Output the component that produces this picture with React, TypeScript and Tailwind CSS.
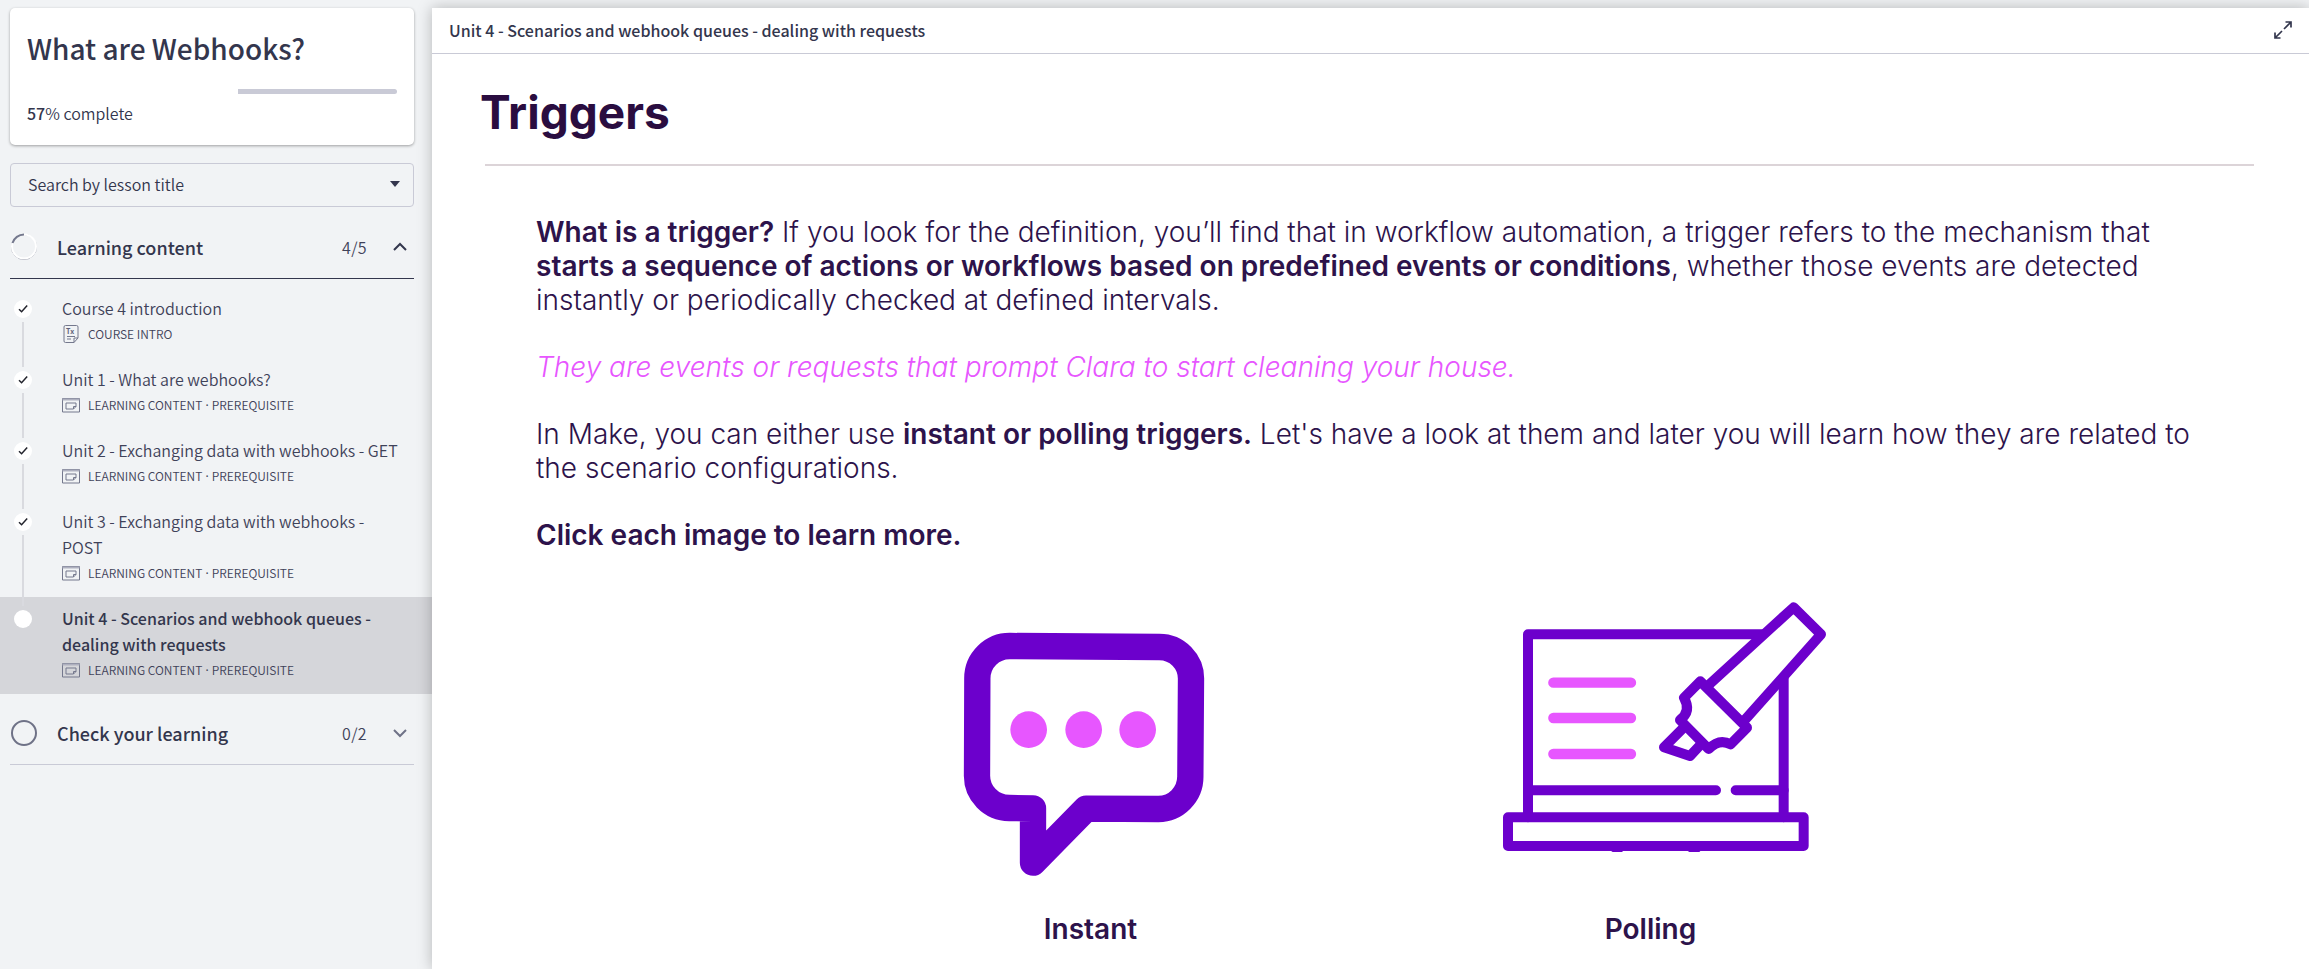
import React from "react";

type Lesson = { title: string; kind: string; prerequisite?: boolean; icon: "text" | "module"; state: "done" | "current" };

const lessons: Lesson[] = [
  { title: "Course 4 introduction", kind: "COURSE INTRO", icon: "text", state: "done" },
  { title: "Unit 1 - What are webhooks?", kind: "LEARNING CONTENT", prerequisite: true, icon: "module", state: "done" },
  { title: "Unit 2 - Exchanging data with webhooks - GET", kind: "LEARNING CONTENT", prerequisite: true, icon: "module", state: "done" },
  { title: "Unit 3 - Exchanging data with webhooks - POST", kind: "LEARNING CONTENT", prerequisite: true, icon: "module", state: "done" },
  { title: "Unit 4 - Scenarios and webhook queues - dealing with requests", kind: "LEARNING CONTENT", prerequisite: true, icon: "module", state: "current" },
];

function TextIcon() {
  return (
    <svg className="h-[18px] w-[18px]" viewBox="0 0 18 18" fill="none" stroke="#74788d" aria-hidden="true">
      <path d="M3.500.5h11a1.500 1.500 0 0 1 1.500 1.500v11l-4 4.500h-8.500a1.500 1.500 0 0 1-1.500-1.500v-14a1.500 1.500 0 0 1 1.500-1.500zM12 17.500v-4.500h4" />
      <path d="M5 11.500h8M5 14h4" />
      <text x="4" y="9" fontSize="7" fontWeight="700" fill="#5d6078" stroke="none">
        Tx
      </text>
    </svg>
  );
}

function ModuleIcon() {
  return (
    <svg className="h-[18px] w-[18px]" viewBox="0 0 18 18" fill="none" stroke="#74788d" aria-hidden="true">
      <path d="M.5 2.500h17v13.500h-17z" />
      <path d="M.5 3.500h17" stroke="#aeb0bf" strokeWidth="2" />
      <path d="M4 7h10v3.500l-2.500 2.500h-7.500zM11.500 13v-2.500h2.500" />
    </svg>
  );
}

function LessonRow({ lesson, last }: { lesson: Lesson; last: boolean }) {
  const current = lesson.state === "current";
  return (
    <li className={current ? "bg-[#d5d6da]" : ""}>
      <a href="#lesson" className="flex pr-8 pl-[14px]" aria-current={current ? "page" : undefined}>
        <span className="flex w-[18px] shrink-0 flex-col items-center pt-[13px]">
          <span className="flex h-[18px] w-[18px] shrink-0 items-center justify-center rounded-full bg-white">
            {!current && (
              <svg className="h-[10px] w-[10px]" viewBox="0 0 10 10" fill="none" stroke="#22232c" strokeWidth="1.500" aria-hidden="true">
                <path d="M1 5.200l2.600 2.500L9.200 1.600" />
              </svg>
            )}
          </span>
          {!last && <span className="mt-1 -mb-[9px] w-[2px] grow bg-[#d9dadf]" />}
        </span>
        <span className="ml-[30px] flex min-w-0 flex-col pt-2 pb-[11px]">
          <span className={current ? "text-[16px] leading-[26px] font-medium text-[#33364d]" : "text-[16px] leading-[26px] font-[350] text-[#3f4259]"}>{lesson.title}</span>
          <span className="flex h-[26px] items-center gap-2 text-[12px] font-[350] text-[#3f4259]">
            {lesson.icon === "text" ? <TextIcon /> : <ModuleIcon />}
            <span>
              {lesson.kind}
              {lesson.prerequisite && (
                <>
                  <span className="font-['Noto_Sans',sans-serif] font-normal"> · </span>
                  PREREQUISITE
                </>
              )}
            </span>
          </span>
        </span>
      </a>
    </li>
  );
}

function SectionHeader({ title, count, open }: { title: string; count: string; open: boolean }) {
  return (
    <button
      type="button"
      aria-expanded={open}
      className={
        open
          ? "mr-[18px] ml-[10px] flex h-[63px] items-center border-b border-[#33364d] text-left"
          : "mr-[18px] ml-[10px] flex h-[63px] items-center border-b border-[#c9cad6] text-left"
      }
    >
      <svg className="h-7 w-7 shrink-0" viewBox="0 0 28 28" fill="none" aria-hidden="true">
        {open ? (
          <>
            <circle cx="14" cy="14" r="12.500" stroke="#9294a5" strokeWidth="1" />
            <circle cx="14" cy="13.500" r="12" stroke="#fff" strokeWidth="2" />
            <path d="M2.500 10A12 12 0 0 1 14 1.500" stroke="#74788d" strokeWidth="2" />
          </>
        ) : (
          <circle cx="14" cy="14" r="12" stroke="#6f7287" strokeWidth="2" />
        )}
      </svg>
      <span className="ml-[19px] grow text-[18px] leading-[26px] font-medium text-[#33364d]">{title}</span>
      <span className="text-[16px] font-[350] tracking-wide text-[#3f4259]">{count}</span>
      <svg className="mr-1.5 ml-[25px] h-4 w-4" viewBox="0 0 16 16" fill="none" stroke={open ? "#33364d" : "#6f7287"} strokeWidth="2" aria-hidden="true">
        <path d={open ? "M2 11l6-6 6 6" : "M2 5l6 6 6-6"} />
      </svg>
    </button>
  );
}

function BubbleDrawing() {
  return (
    <svg className="w-full" viewBox="-57 -30 1080 870" fill="none" aria-hidden="true">
      <path
        d="M240 138L688 141A95 95 0 0 1 783 238L781 530A97 97 0 0 1 685 627L468 626L309 788V625L238 624A97 97 0 0 1 141 525L142 235A97 97 0 0 1 240 138z"
        stroke="#6c00cc"
        strokeWidth="79"
        strokeLinejoin="round"
      />
      <g fill="#e756ff">
        <circle cx="296" cy="389" r="55" />
        <circle cx="461" cy="389" r="55" />
        <circle cx="623" cy="389" r="55" />
      </g>
    </svg>
  );
}

function LaptopDrawing() {
  return (
    <svg className="w-full" viewBox="-27 30 1080 870" fill="none" aria-hidden="true">
      <g stroke="#6c00cc" strokeWidth="30" strokeLinejoin="round" strokeLinecap="round">
        <path d="M144 712V163H845M911 295V712" />
        <path d="M144 631H708M767 631H911" />
        <path d="M84 712H971V798H84z" />
        <path d="M688 313L941 82L1023 163L790 425" />
        <path d="M661 304L801 443L752 493Q718 474 686 507L600 420Q635 393 612 353z" />
        <path d="M612 442L552 502L630 528L662 494" />
      </g>
      <path d="M392 812h38l-4 4h-28zM622 812h40l-4 4h-30z" fill="#6c00cc" />
      <path d="M220 308H453M220 414H453M220 522H453" stroke="#e756ff" strokeWidth="31" strokeLinecap="round" />
    </svg>
  );
}

export default function App() {
  return (
    <div className="flex min-h-screen bg-[#f1f3f5] pt-2 font-['Noto_Sans_CJK_SC',sans-serif] text-[#33364d]">
      <aside className="flex w-[432px] shrink-0 flex-col">
        <section className="mr-[18px] ml-[10px] rounded-[5px] bg-white px-[17px] pt-5 pb-[19px] shadow-[0_1px_3px_rgba(0,0,0,0.35)]">
          <h1 className="text-[28px] leading-10 font-medium">What are Webhooks?</h1>
          <div role="progressbar" aria-label="Course progress" aria-valuenow={57} aria-valuemin={0} aria-valuemax={100} className="mt-[21px] flex h-[5px] justify-end">
            <span className="w-[43%] rounded-r-[3px] bg-[#c9cad6]" />
          </div>
          <p className="mt-[6px] text-[16px] leading-[26px] font-[350]">
            <strong className="font-medium">57</strong>% complete
          </p>
        </section>
        <button type="button" className="mr-[18px] ml-[10px] mt-[18px] flex h-11 items-center justify-between rounded-[4px] border border-[#c9cad6] pr-[13px] pb-[2px] pl-[17px] text-[16px] font-[350]">
          Search by lesson title
          <svg className="h-[6px] w-[10px]" viewBox="0 0 10 6" fill="#33364d" aria-hidden="true">
            <path d="M0 0h10L5 6z" />
          </svg>
        </button>
        <nav className="mt-[9px] flex flex-col" aria-label="Lessons">
          <SectionHeader title="Learning content" count="4/5" open />
          <ul className="pt-2">
            {lessons.map((lesson, i) => (
              <LessonRow key={lesson.title} lesson={lesson} last={i === lessons.length - 1} />
            ))}
          </ul>
          <div className="mt-2 flex flex-col">
            <SectionHeader title="Check your learning" count="0/2" open={false} />
          </div>
        </nav>
      </aside>

      <main className="relative flex min-w-0 grow flex-col bg-white shadow-[0_0_14px_rgba(0,0,0,0.25)]">
        <header className="flex h-[46px] items-center justify-between border-b border-[#c9cad6] pr-[17px] pb-[2px] pl-[17px]">
          <h2 className="text-[16px] font-medium">Unit 4 - Scenarios and webhook queues - dealing with requests</h2>
          <button type="button" aria-label="Full screen">
            <svg className="h-[18px] w-[18px]" viewBox="0 0 18 18" fill="none" stroke="#33364d" strokeWidth="1.700" aria-hidden="true">
              <path d="M11.500 1h5.500v5.500M17 1l-7 7M1 11.500v5.500h5.500M1 17l7-7" />
            </svg>
          </button>
        </header>
        <article className="flex flex-col pr-[50px] pl-12 font-['Inter',sans-serif] text-[28px] leading-[34px] font-light text-[#2d134b]">
          <h1 className="mt-[28px] text-[46px] leading-[60px] font-bold text-[#2a0d40]">Triggers</h1>
          <hr className="mx-[5px] mt-[22px] border-t-2 border-[#dcd4d8]" />
          <div className="flex flex-col gap-[33px] pt-[49px] pr-[50px] pl-14">
            <p>
              <strong className="font-semibold">What is a trigger?</strong> If you look for the definition, you’ll find that in workflow automation, a trigger refers to the mechanism that <strong className="font-semibold">starts a sequence of actions or workflows based on predefined events or conditions</strong>, whether those events are detected instantly or periodically checked at defined intervals.
            </p>
            <p className="text-[#e756ff] italic">They are events or requests that prompt Clara to start cleaning your house.</p>
            <p>
              In Make, you can either use <strong className="font-semibold">instant or polling triggers.</strong> Let's have a look at them and later you will learn how they are related to the scenario configurations.
            </p>
            <p className="font-semibold">Click each image to learn more.</p>
          </div>
          <div className="mt-[38px] flex justify-center gap-[200px] pb-[22px] pl-[2px] font-semibold">
            <button type="button" className="flex w-[360px] flex-col items-center gap-8">
              <BubbleDrawing />
              Instant
            </button>
            <button type="button" className="flex w-[360px] flex-col items-center gap-8">
              <LaptopDrawing />
              Polling
            </button>
          </div>
        </article>
      </main>
    </div>
  );
}
